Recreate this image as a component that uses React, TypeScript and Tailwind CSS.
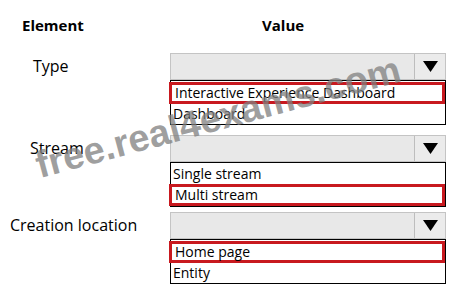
import React from 'react';

type Field = {
  label: string;
  labelPad: string;
  gap: string;
  options: string[];
  picked: number;
};

const fields: Field[] = [
  { label: 'Type', labelPad: 'pl-[33px]', gap: 'mt-0', options: ['Interactive Experience Dashboard', 'Dashboard'], picked: 0 },
  { label: 'Stream', labelPad: 'pl-[30px]', gap: 'mt-[10px]', options: ['Single stream', 'Multi stream'], picked: 1 },
  { label: 'Creation location', labelPad: 'pl-[10px]', gap: 'mt-[5px]', options: ['Home page', 'Entity'], picked: 0 },
];

const Dropdown = () => (
  <div className="flex h-[27px] border border-[#c4c4c4] bg-[#e8e8e8]">
    <div className="flex-1" />
    <div className="flex w-[31px] items-center justify-center border-l border-[#bdbdbd] bg-[#ebebeb]">
      <svg width="15" height="11" viewBox="0 0 15 11">
        <polygon points="0,0 15,0 7.5,11" fill="#000" />
      </svg>
    </div>
  </div>
);

const OptionList = ({ options, picked }: { options: string[]; picked: number }) => (
  <div className="flex h-[45px] flex-col border border-black pt-[1px]">
    {options.map((opt, i) =>
      i === picked ? (
        <div
          key={opt}
          className="-ml-[2px] flex h-[22px] items-center border-[3px] border-[#c8191f] pl-[3px] leading-none"
        >
          {opt}
        </div>
      ) : (
        <div key={opt} className="flex h-[20px] items-center pl-[2px] leading-none">
          {opt}
        </div>
      )
    )}
  </div>
);

export default function App() {
  return (
    <div
      className="relative h-[291px] w-[453px] overflow-hidden bg-white text-black"
      style={{ fontFamily: '"Open Sans", "Noto Sans", sans-serif' }}
    >
      {/* header */}
      <div className="flex h-[53px] pt-[14px] text-[15px] font-bold">
        <div className="w-[262px] pl-[22px]">Element</div>
        <div>Value</div>
      </div>

      {fields.map((f) => (
        <div key={f.label} className={`flex ${f.gap}`}>
          <div className={`flex h-[25px] w-[170px] items-center text-[16px] ${f.labelPad}`}>{f.label}</div>
          <div className="w-[276px] text-[14px]">
            <Dropdown />
            <OptionList options={f.options} picked={f.picked} />
          </div>
        </div>
      ))}

      {/* watermark */}
      <div className="pointer-events-none absolute left-0 right-0 top-[98px] flex justify-center">
        <div
          className="translate-x-[-8px] rotate-[-15deg] text-[38px] font-bold leading-none text-[#808080]/75"
          style={{ fontFamily: '"Liberation Sans", Arial, sans-serif' }}
        >
          free.real4exams.com
        </div>
      </div>
    </div>
  );
}
